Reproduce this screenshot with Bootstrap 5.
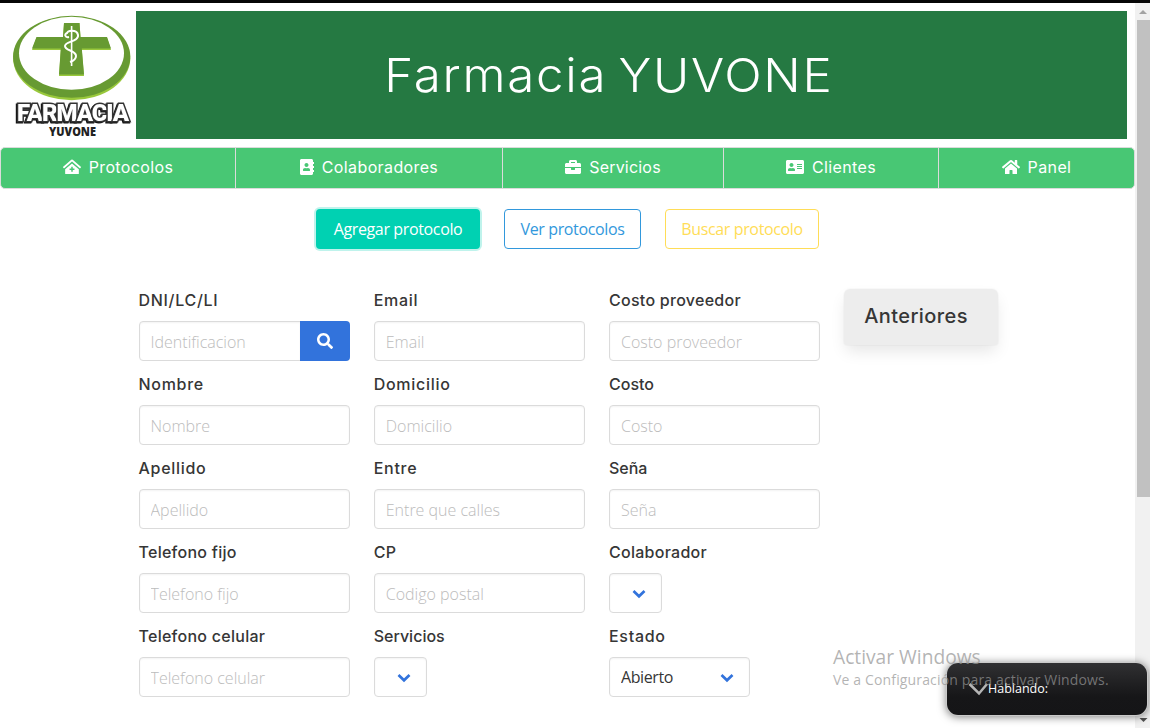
<!DOCTYPE html>
<html lang="es">
<head>
<meta charset="utf-8">
<title>Farmacia YUVONE</title>
<link href="https://cdn.jsdelivr.net/npm/bootstrap@5.3.0/dist/css/bootstrap.min.css" rel="stylesheet">
<style>
  body{height:728px;font-family:"Open Sans","Noto Sans",sans-serif;color:#363636}
  .shell{height:728px;border-top:3px solid #060606}
  .logo-box{width:136px;flex:none}
  .brand-bar{background:#257942;height:128px;margin:8px 8px 0 0;padding-right:45px}
  .brand-bar h1{font:300 46.5px/1 Inter,sans-serif;letter-spacing:1.6px;word-spacing:-4px;color:#fff;transform:scaleX(1.06)}
  .main-tabs{height:42px;margin-top:8px;border:1px solid #dbdbdb;border-radius:5px;background:#48c774;overflow:hidden}
  .main-tabs .nav-link{color:#fff;font:400 16px/24px Inter,sans-serif;letter-spacing:.38px;border-radius:0;padding:0 0 2px}
  .main-tabs .nav-link+.nav-link{border-left:1px solid #dbdbdb}
  .main-tabs svg{height:16px;fill:#fff;flex:none}
  .t1{width:234px}.t2{width:267px}.t3{width:221px}.t4{width:215px}.t5{width:196px}
  .t3.nav-link{letter-spacing:.2px}
  .actions{margin-top:20px;gap:24px}
  .actions .btn{height:40px;padding:0;border-radius:4px;font-size:16px;line-height:38px;font-weight:400;letter-spacing:-.36px}
  .b-add{width:164px;background:#00d1b2!important;color:#fff!important;box-shadow:0 0 0 2px rgba(0,209,178,.25)}
  .b-see{width:137px;border-color:#3298dc;color:#3298dc}
  .b-find{width:154px;border-color:#ffdd57;color:#ffdd57}
  .form-area{margin:39px 0 0 138.5px;gap:24px}
  .fcol{width:211.25px}
  .fcol .form-label{font:500 16px/24px Inter,sans-serif;letter-spacing:.27px;margin:0 0 9px;display:block}
  .fcol .form-label.lw{letter-spacing:.7px}
  .fcol .form-label.ln{letter-spacing:0}
  .fcol .field{height:84px}
  .fcol .form-control,.fcol .form-select{height:40px;border:1px solid #dbdbdb;border-radius:4px;padding:2px 11px 0;font-size:16px;font-weight:300;color:#363636;box-shadow:inset 0 1px 2px rgba(10,10,10,.05)}
  .fcol .form-control::placeholder{color:#bcbcbc;opacity:1}
  .fcol .form-select{background-image:none;font-weight:400;padding-top:0;letter-spacing:-.4px}
  .input-group .btn{width:50px;background:#3273dc;border:0;padding:0 0 3px;border-radius:0 4px 4px 0}
  .select-wrap{position:relative}
  .select-wrap svg{position:absolute;right:16px;top:16px}
  .w-s{width:53px}.w-m{width:141px}
  .prev-box{width:153.500px;height:56px;background:#ededed;border-radius:6px 6px 3px 3px;box-shadow:0 8px 16px -2px rgba(10,10,10,.1),0 0 0 1px rgba(10,10,10,.02);font:500 20px/55px Inter,sans-serif;letter-spacing:.4px;padding-left:20px;margin-top:1px}
  .scroll{width:15px;background:#f1f1f1;flex:none}
  .thumb{width:13px;height:477px;background:#c1c1c1}
  .talk{position:absolute;left:947px;top:663px;width:200px;height:52px;padding-left:21px;border-radius:11px;background:linear-gradient(#303032,#161618 65%,#151517);box-shadow:0 0 0 1px #c9c9c9,0 1px 8px 1px rgba(0,0,0,.5);color:#fff;font-size:12.5px}
  .notice{position:absolute;left:833px;top:645px;color:rgba(150,150,150,.72);white-space:nowrap}
  .notice .n1{font-size:19.2px;line-height:24px}
  .notice .n2{font-size:14px;line-height:21px;letter-spacing:.15px}
  .sign{paint-order:stroke;filter:drop-shadow(-1px 1px 0 #111)}
</style>
</head>
<body class="overflow-hidden position-relative">
<svg class="d-none">
  <symbol id="chev" viewBox="0 0 14 10"><path d="M1.500 2 7 7.300 12.500 2" fill="none" stroke="#3273dc" stroke-width="2.700"/></symbol>
</svg>
<div class="shell d-flex">
  <main class="flex-grow-1 overflow-hidden">
    <header class="d-flex">
      <div class="logo-box">
        <svg width="136" height="136" viewBox="0 3 136 136" class="d-block">
          <ellipse cx="71.700" cy="58.300" rx="58.600" ry="42" fill="#99c83c"/>
          <ellipse cx="71.700" cy="56.800" rx="58.600" ry="41" fill="#679a32"/>
          <ellipse cx="71.500" cy="53.300" rx="52.500" ry="36.500" fill="#fff"/>
          <path d="M64 23h15.500l1 14.500H107l4 12.500H81.800l2.200 26H59l1.800-26H32l4.500-12.500h26.500z" fill="#99c83c"/>
          <path d="M64 23h15.500l1 14H107l4 11.500H81.800l2.200 26H59l1.800-26H32l4.500-11.500h26.500z" fill="#679a32"/>
          <path d="M71.600 26v40" stroke="#fff" stroke-width="1.600"/>
          <path d="M67 34c-1-4 10-5 11 1 1 7-13 6-13 11 0 5 11 4 11 10 0 3-3 5-6 6M67 33c-3 1-2 5 2 4" fill="none" stroke="#fff" stroke-width="2"/>
          <text class="sign" x="17" y="121" font-family="Roboto,sans-serif" font-weight="900" font-size="24" textLength="112" lengthAdjust="spacing" fill="#fff" stroke="#333" stroke-width="3">FARMACIA</text>
          <text x="49" y="135.800" font-family="Open Sans,sans-serif" font-weight="800" font-size="11.500" textLength="47" lengthAdjust="spacingAndGlyphs" fill="#222">YUVONE</text>
        </svg>
      </div>
      <div class="brand-bar flex-grow-1 d-flex align-items-center justify-content-center"><h1 class="m-0">Farmacia YUVONE</h1></div>
    </header>
    <nav class="main-tabs nav flex-nowrap">
      <a class="nav-link t1 d-flex align-items-center justify-content-center" href="#"><svg viewBox="0 0 576 512" class="me-2"><path fill-rule="evenodd" d="M288 140 69 325v139a16 16 0 0 0 16 16h406a16 16 0 0 0 16-16V325zM264 250h48v54h54v48h-54v54h-48v-54h-54v-48h54z"/><path d="M571 251 311 23a36 36 0 0 0-46 0L5 251a12 12 0 0 0-1 17l21 24a12 12 0 0 0 17 1L278 86a16 16 0 0 1 20 0l236 207a12 12 0 0 0 17-1l21-24a12 12 0 0 0-1-17z"/></svg><span>Protocolos</span></a>
      <a class="nav-link t2 d-flex align-items-center justify-content-center" href="#"><svg viewBox="0 0 448 512" class="me-2"><path d="M436 160c6.600 0 12-5.400 12-12v-40c0-6.600-5.400-12-12-12h-20V48c0-26.500-21.500-48-48-48H48C21.500 0 0 21.500 0 48v416c0 26.500 21.500 48 48 48h320c26.500 0 48-21.500 48-48v-48h20c6.600 0 12-5.400 12-12v-40c0-6.600-5.400-12-12-12h-20v-64h20c6.600 0 12-5.400 12-12v-40c0-6.600-5.400-12-12-12h-20v-64h20zm-228-32c35.300 0 64 28.700 64 64s-28.700 64-64 64-64-28.700-64-64 28.700-64 64-64zm112 236.800c0 10.600-10 19.200-22.400 19.200H118.400C106 384 96 375.400 96 364.800v-19.200c0-31.800 30.100-57.600 67.200-57.600h5c12.300 5.100 25.700 8 39.800 8s27.600-2.900 39.800-8h5c37.100 0 67.200 25.800 67.200 57.600v19.200z"/></svg><span>Colaboradores</span></a>
      <a class="nav-link t3 d-flex align-items-center justify-content-center" href="#"><svg viewBox="0 0 512 512" class="me-2"><path d="M320 336c0 8.840-7.160 16-16 16h-96c-8.840 0-16-7.160-16-16v-48H0v144c0 25.600 22.400 48 48 48h416c25.600 0 48-22.400 48-48V288H320v48zm144-208h-80V80c0-25.600-22.400-48-48-48H176c-25.600 0-48 22.400-48 48v48H48c-25.600 0-48 22.400-48 48v80h512v-80c0-25.600-22.400-48-48-48zm-144 0H192V96h128v32z"/></svg><span>Servicios</span></a>
      <a class="nav-link t4 d-flex align-items-center justify-content-center" href="#"><svg viewBox="0 0 576 512" class="me-2"><path fill-rule="evenodd" d="M528 32H48C21.500 32 0 53.500 0 80v352c0 26.500 21.500 48 48 48h480c26.500 0 48-21.500 48-48V80c0-26.500-21.500-48-48-48zM176 128c35.300 0 64 28.700 64 64s-28.700 64-64 64-64-28.700-64-64 28.700-64 64-64zm112 236.800c0 10.600-10 19.200-22.400 19.200H86.400C74 384 64 375.400 64 364.800v-19.200c0-31.800 30.100-57.600 67.200-57.600h5c12.300 5.100 25.700 8 39.800 8s27.600-2.900 39.800-8h5c37.100 0 67.200 25.800 67.200 57.600zM352 160h160v32H352zM352 224h160v32H352zM352 288h160v32H352z"/></svg><span>Clientes</span></a>
      <a class="nav-link t5 d-flex align-items-center justify-content-center" href="#"><svg viewBox="0 0 576 512" class="me-2"><path d="M280.370 148.260L96 300.110V464a16 16 0 0 0 16 16l112.060-.29a16 16 0 0 0 15.920-16V368a16 16 0 0 1 16-16h64a16 16 0 0 1 16 16v95.640a16 16 0 0 0 16 16.050L464 480a16 16 0 0 0 16-16V300L295.670 148.260a12.190 12.190 0 0 0-15.300 0zM571.600 251.470L488 182.560V44.050a12 12 0 0 0-12-12h-56a12 12 0 0 0-12 12v72.610L318.470 43a48 48 0 0 0-61 0L4.340 251.470a12 12 0 0 0-1.600 16.900l25.500 31A12 12 0 0 0 45.150 301l235.220-193.740a12.190 12.190 0 0 1 15.300 0L530.900 301a12 12 0 0 0 16.900-1.600l25.500-31a12 12 0 0 0-1.700-16.930z"/></svg><span>Panel</span></a>
    </nav>
    <div class="actions d-flex justify-content-center">
      <button class="btn b-add"><span>Agregar protocolo</span></button>
      <button class="btn b-see"><span>Ver protocolos</span></button>
      <button class="btn b-find"><span>Buscar protocolo</span></button>
    </div>
    <form class="form-area d-flex">
      <div class="fcol">
        <div class="field"><label class="form-label lw"><span>DNI/LC/LI</span></label>
          <div class="input-group flex-nowrap"><input class="form-control" placeholder="Identificacion"><button type="button" class="btn" aria-label="Buscar"><svg width="16" height="16" viewBox="0 0 512 512" fill="#fff"><path d="M505 442.700L405.300 343c-4.500-4.500-10.600-7-17-7H372c27.600-35.300 44-79.700 44-128C416 93.100 322.900 0 208 0S0 93.100 0 208s93.100 208 208 208c48.300 0 92.700-16.400 128-44v16.300c0 6.400 2.500 12.500 7 17l99.700 99.700c9.400 9.400 24.600 9.400 33.900 0l28.300-28.300c9.400-9.400 9.400-24.600.1-34zM208 336c-70.700 0-128-57.200-128-128 0-70.700 57.200-128 128-128 70.700 0 128 57.200 128 128 0 70.700-57.200 128-128 128z"/></svg></button></div></div>
        <div class="field"><label class="form-label lw"><span>Nombre</span></label><input class="form-control" placeholder="Nombre"></div>
        <div class="field"><label class="form-label lw"><span>Apellido</span></label><input class="form-control" placeholder="Apellido"></div>
        <div class="field"><label class="form-label"><span>Telefono fijo</span></label><input class="form-control" placeholder="Telefono fijo"></div>
        <div class="field"><label class="form-label"><span>Telefono celular</span></label><input class="form-control" placeholder="Telefono celular"></div>
      </div>
      <div class="fcol">
        <div class="field"><label class="form-label lw"><span>Email</span></label><input class="form-control" placeholder="Email"></div>
        <div class="field"><label class="form-label lw"><span>Domicilio</span></label><input class="form-control" placeholder="Domicilio"></div>
        <div class="field"><label class="form-label lw"><span>Entre</span></label><input class="form-control" placeholder="Entre que calles"></div>
        <div class="field"><label class="form-label"><span>CP</span></label><input class="form-control" placeholder="Codigo postal"></div>
        <div class="field"><label class="form-label ln"><span>Servicios</span></label><div class="select-wrap w-s"><select class="form-select"></select><svg width="14" height="10"><use href="#chev"/></svg></div></div>
      </div>
      <div class="fcol">
        <div class="field"><label class="form-label"><span>Costo proveedor</span></label><input class="form-control" placeholder="Costo proveedor"></div>
        <div class="field"><label class="form-label ln"><span>Costo</span></label><input class="form-control" placeholder="Costo"></div>
        <div class="field"><label class="form-label ln"><span>Seña</span></label><input class="form-control" placeholder="Seña"></div>
        <div class="field"><label class="form-label"><span>Colaborador</span></label><div class="select-wrap w-s"><select class="form-select"></select><svg width="14" height="10"><use href="#chev"/></svg></div></div>
        <div class="field"><label class="form-label lw"><span>Estado</span></label><div class="select-wrap w-m"><select class="form-select"><option>Abierto</option></select><svg width="14" height="10"><use href="#chev"/></svg></div></div>
      </div>
      <div class="prev-box"><span>Anteriores</span></div>
    </form>
  </main>
  <aside class="scroll d-flex flex-column align-items-end">
    <svg width="15" height="17"><path d="M4 11h8L8 7z" fill="#a3a3a3"/></svg>
    <div class="thumb"></div>
    <svg width="15" height="17" class="mt-auto"><path d="M4.500 7h8l-4 4z" fill="#505050"/></svg>
  </aside>
</div>
<div class="talk d-flex align-items-center"><svg width="20" height="14"><path d="M1.500 2 11 11.500 19 2" fill="none" stroke="#b5b5b5" stroke-width="2.500"/></svg><span>Hablando:</span></div>
<div class="notice"><div class="n1"><span>Activar Windows</span></div><div class="n2"><span>Ve a Configuración para activar Windows.</span></div></div>
</body>
</html>
